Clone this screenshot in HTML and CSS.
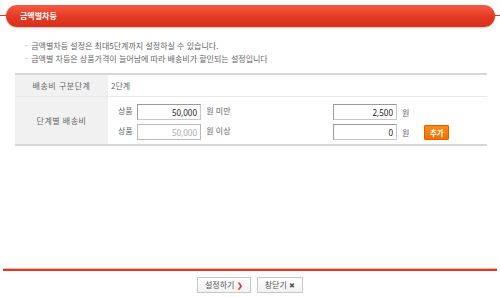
FILE: index.html
```html
<!DOCTYPE html>
<html lang="ko">
  <head>
    <meta charset="UTF-8" />
    <title>금액별차등</title>
    <link rel="stylesheet" href="styles.css">
  </head>
  <body>
    <div class="page">
      <div class="head">
        <h2 class="title">금액별차등</h2>
      </div>

      <ul class="notes">
        <li>금액별차등 설정은 최대5단계까지 설정하실 수 있습니다.</li>
        <li>금액별 차등은 상품가격이 늘어남에 따라 배송비가 할인되는 설정입니다</li>
      </ul>

      <div class="grid">
        <div class="row row-step">
          <div class="label">배송비 구분단계</div>
          <div class="value">2단계</div>
        </div>
        <div class="row row-fee">
          <div class="label">단계별 배송비</div>
          <div class="value">
            <div class="tier">
              <div class="range">
                상품 <input class="amount" type="text" value="50,000" /> 원 미만
              </div>
              <div class="fee">
                <input class="amount" type="text" value="2,500" /> 원
              </div>
            </div>
            <div class="tier">
              <div class="range">
                상품 <input class="amount" type="text" value="50,000" disabled /> 원 이상
              </div>
              <div class="fee">
                <input class="amount" type="text" value="0" /> 원
                <button type="button" class="add">추가</button>
              </div>
            </div>
          </div>
        </div>
      </div>

      <div class="foot">
        <button type="button" class="btn">설정하기 <span class="go">&#x276F;</span></button>
        <button type="button" class="btn">창닫기 <span class="x">&#x2716;</span></button>
      </div>
    </div>
  </body>
</html>
```

FILE: styles.css
```css
body {
  margin: 0;
  background: #fff;
  font-family: "Noto Sans CJK KR", "Noto Sans", sans-serif;
  font-size: 8px;
  color: #666;
}
.page {
  width: 500px;
  height: 298px;
  display: flex;
  flex-direction: column;
}
.head {
  padding: 5px 5px 0 6px;
  background: linear-gradient(#e33a24, #e33a24) no-repeat 0 15px / 100% 1px;
}
.title {
  margin: 0;
  height: 22px;
  line-height: 21px;
  padding-left: 14px;
  border-radius: 11px;
  background: linear-gradient(#f65a43, #e23a22 55%, #d8301a);
  box-shadow: 0 1px 2px rgba(0, 0, 0, 0.25);
  color: #fff;
  font-size: 8px;
  font-weight: bold;
}
.notes {
  list-style: none;
  margin: 12px 0 0;
  padding: 0 0 0 25px;
  line-height: 13px;
}
.notes li::before {
  content: "·";
  margin-right: 4px;
  color: #999;
}
.grid {
  margin: 8px 0 0 15px;
  width: 472px;
  border-top: 2px solid #d6d6d6;
  border-bottom: 2px solid #d6d6d6;
}
.row {
  display: grid;
  grid-template-columns: 93px 1fr;
}
.row + .row {
  border-top: 1px solid #e8e8e8;
}
.label {
  display: flex;
  align-items: center;
  justify-content: center;
  background: #f1f1f1;
  letter-spacing: 0.5px;
}
.row-step {
  height: 21px;
}
.row-step .value {
  display: flex;
  align-items: center;
  padding-left: 3px;
}
.row-fee .value {
  padding: 5px 0 2px 3px;
}
.tier {
  display: flex;
  align-items: center;
  height: 20px;
}
.range {
  width: 215px;
  padding-left: 7px;
}
.fee {
  display: flex;
  align-items: center;
  gap: 5px;
}
.amount {
  box-sizing: border-box;
  width: 64px;
  height: 16px;
  margin: 0 3px 0 2px;
  padding: 0 3px;
  border: 1px solid #9a9a9a;
  border-right-color: #c8c8c8;
  border-bottom-color: #c8c8c8;
  font: 8px "Noto Sans", sans-serif;
  color: #222;
  text-align: right;
  vertical-align: middle;
}
.amount:disabled {
  background: #fff;
  color: #aaa;
  border-color: #bbb;
}
.fee .amount {
  margin: 0;
}
.add {
  margin-left: 10px;
  width: 25px;
  height: 15px;
  padding: 0;
  border: 1px solid #e06000;
  border-radius: 1px;
  background: linear-gradient(#ff8a1c, #f36f00);
  color: #fff;
  font: bold 7.5px "Noto Sans CJK KR", sans-serif;
}
.foot {
  margin-top: auto;
  margin-left: 3px;
  margin-right: 3px;
  border-top: 2px solid #e2361f;
  box-shadow: 0 -1px 0 #f3b3a6;
  height: 29px;
  display: flex;
  justify-content: center;
  align-items: center;
  gap: 6px;
  box-sizing: border-box;
}
.btn {
  height: 16px;
  padding: 0 7px;
  border: 1px solid #c9c9c9;
  background: linear-gradient(#fff, #f1f1f1);
  color: #555;
  font: 8px "Noto Sans CJK KR", sans-serif;
}
.go {
  color: #e3361f;
  font-size: 7px;
  font-weight: bold;
}
.x {
  color: #555;
  font-size: 7px;
}
```
